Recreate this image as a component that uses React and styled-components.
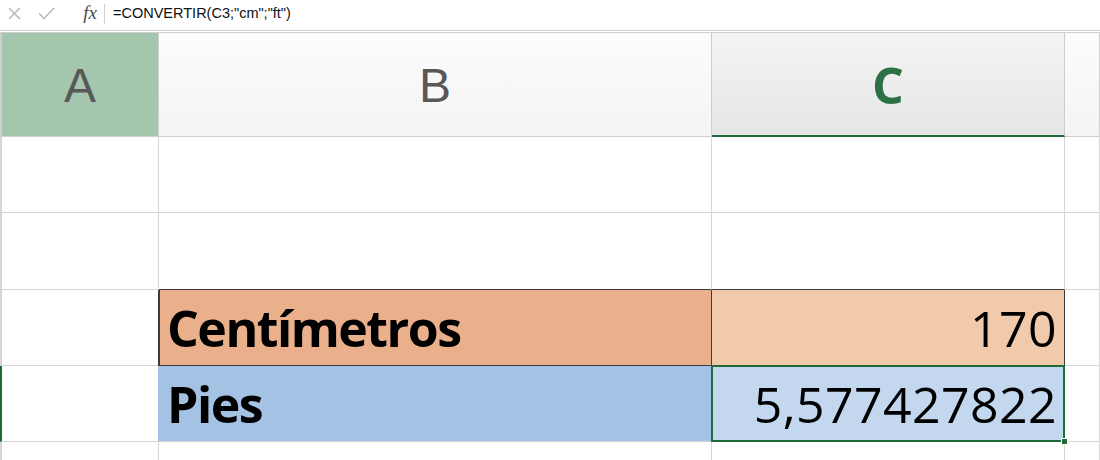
import React from "react";
import styled, { createGlobalStyle } from "styled-components";

const Global = createGlobalStyle`
  html, body { margin: 0; padding: 0; background: #fff; }
  body { width: 1100px; height: 460px; overflow: hidden; }
  * { box-sizing: border-box; }
`;

const Page = styled.div`
  width: 1100px;
  height: 460px;
  display: flex;
  flex-direction: column;
  background: #fff;
  overflow: hidden;
`;

const FormulaBar = styled.div`
  height: 33px;
  flex: none;
  display: flex;
  align-items: center;
  border-bottom: 3px double #cfcfcf;
  padding-left: 8px;
`;

const IconBtn = styled.span`
  width: ${(p) => p.$w}px;
  display: flex;
  align-items: center;
  justify-content: ${(p) => p.$justify || "center"};
  margin-top: -3px;
`;

const Fx = styled.span`
  font-family: "Liberation Serif", serif;
  font-style: italic;
  font-size: 19px;
  color: #4a4a4a;
  width: 24px;
  text-align: center;
  margin-left: 0;
  margin-top: -5px;
`;

const Separator = styled.span`
  width: 1px;
  height: 20px;
  background: #d0d0d0;
  margin: -3px 8px 0 2px;
`;

const Formula = styled.span`
  font-family: "Liberation Sans", Arial, sans-serif;
  font-size: 14.5px;
  color: #111;
  margin-top: -4px;
`;

const Sheet = styled.div`
  flex: 1;
  display: grid;
  grid-template-columns: 159px 553px 353px 1fr;
  grid-template-rows: 104px 76px 77px 76px 76px 1fr;
`;

const Header = styled.div`
  display: flex;
  align-items: center;
  justify-content: center;
  border-right: 1px solid #cfcfcf;
  border-bottom: ${(p) => (p.$active ? "2px solid #1f6b3a" : "1px solid #cfcfcf")};
  border-left: ${(p) => (p.$first ? "2px solid #cfcfcf" : "none")};
  background: ${(p) =>
    p.$selected
      ? "#a3c6ad"
      : p.$active
      ? "linear-gradient(#f4f4f4, #e6e6e6)"
      : "linear-gradient(#fcfcfc, #f4f4f4)"};
  color: ${(p) => (p.$active ? "#2e7045" : "#585858")};
  font-family: ${(p) =>
    p.$active ? '"Open Sans", sans-serif' : '"Liberation Sans", Arial, sans-serif'};
  font-weight: ${(p) => (p.$active ? 700 : 400)};
  font-size: ${(p) => (p.$active ? "50px" : "48px")};
  padding-top: 2px;
`;

const Cell = styled.div`
  position: relative;
  display: flex;
  align-items: center;
  justify-content: ${(p) => (p.$num ? "flex-end" : "flex-start")};
  padding: 0 ${(p) => (p.$num ? "7px" : "0")} 0 ${(p) => (p.$num ? "0" : "7px")};
  border-right: 1px solid ${(p) => p.$right || p.$edge || "#d6d6d6"};
  border-bottom: ${(p) => (p.$last ? "none" : `1px solid ${p.$edge || "#d6d6d6"}`)};
  border-left: ${(p) => (p.$lead ? `2px solid ${p.$lead}` : "none")};
  margin-left: ${(p) => (p.$shift ? "-1px" : "0")};
  background: ${(p) => p.$bg || "#fff"};
  font-family: "Open Sans", sans-serif;
  font-size: 50px;
  font-weight: ${(p) => (p.$bold ? 700 : 400)};
  letter-spacing: ${(p) => (p.$bold ? "-1.5px" : "0.4px")};
  color: #000;
  line-height: 1;
  white-space: nowrap;
  z-index: ${(p) => (p.$top ? 2 : "auto")};
`;

const Selection = styled.div`
  position: absolute;
  left: -1px;
  top: -1px;
  right: -1px;
  bottom: -1px;
  border: 2px solid #1f6b3a;
  pointer-events: none;
`;

const Handle = styled.div`
  position: absolute;
  right: -4px;
  bottom: -4px;
  width: 7px;
  height: 7px;
  background: #1f6b3a;
  border: 1px solid #fff;
`;

const XIcon = () => (
  <svg width="13" height="13" viewBox="0 0 13 13">
    <path d="M1 1 L12 12 M12 1 L1 12" stroke="#b8b8b8" strokeWidth="1.5" fill="none" />
  </svg>
);

const CheckIcon = () => (
  <svg width="17" height="13" viewBox="0 0 17 13">
    <path d="M1 6.5 L6 11.5 L16 1" stroke="#b8b8b8" strokeWidth="1.5" fill="none" />
  </svg>
);

export default function App() {
  const grid = "#d6d6d6";
  const dark = "#3c3c3c";
  return (
    <Page>
      <Global />
      <FormulaBar>
        <IconBtn $w={30} $justify="flex-start">
          <XIcon />
        </IconBtn>
        <IconBtn $w={40} $justify="flex-start">
          <CheckIcon />
        </IconBtn>
        <Fx>fx</Fx>
        <Separator />
        <Formula>=CONVERTIR(C3;"cm";"ft")</Formula>
      </FormulaBar>
      <Sheet>
        <Header $first $selected>A</Header>
        <Header>B</Header>
        <Header $active>C</Header>
        <Header />

        <Cell $lead={grid} />
        <Cell />
        <Cell />
        <Cell />

        <Cell $lead={grid} />
        <Cell $edge={dark} $right={grid} />
        <Cell $edge={dark} $right={grid} />
        <Cell />

        <Cell $lead={grid} />
        <Cell $bold $bg="#e9b08b" $edge={dark} $lead={dark} $shift>
          Centímetros
        </Cell>
        <Cell $num $bg="#f1caab" $edge={dark}>
          170
        </Cell>
        <Cell />

        <Cell $lead="#1f6b3a" />
        <Cell $bold $bg="#a3c2e4" $lead="#a3c2e4" $shift>
          Pies
        </Cell>
        <Cell $num $bg="#c3d7ee" $top>
          5,577427822
          <Selection />
          <Handle />
        </Cell>
        <Cell />

        <Cell $lead={grid} $last />
        <Cell $last />
        <Cell $last />
        <Cell $last />
      </Sheet>
    </Page>
  );
}
